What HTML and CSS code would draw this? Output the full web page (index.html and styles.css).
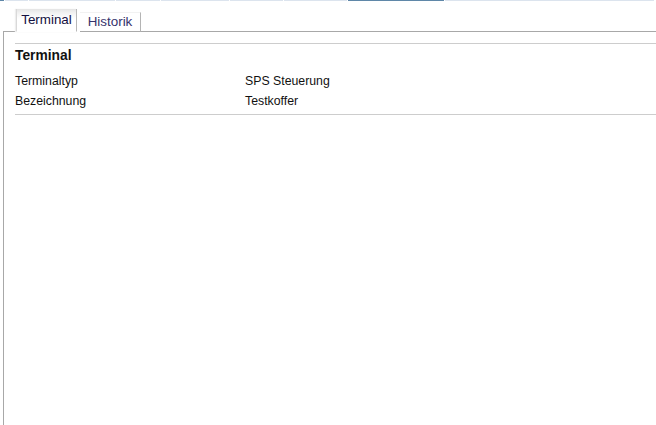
FILE: index.html
```html
<!DOCTYPE html>
<html>
<head>
<meta charset="utf-8">
<link rel="stylesheet" href="styles.css">
</head>
<body>
<div class="topstrip">
  <span class="seg dark" style="width:4px"></span>
  <span class="seg" style="width:23px"></span>
  <span class="seg" style="width:86px"></span>
  <span class="seg" style="width:44px"></span>
  <span class="seg" style="width:68px"></span>
  <span class="seg" style="width:53px"></span>
  <span class="seg" style="width:63px"></span>
  <span class="seg dark" style="width:96px"></span>
  <span class="seg" style="width:209px"></span>
</div>
<div class="tabbar">
  <div class="tab active">Terminal</div>
  <div class="tab">Historik</div>
  <div class="tabfill"></div>
</div>
<div class="panel">
  <div class="content">
    <h2 class="title">Terminal</h2>
    <div class="rows">
      <div class="row"><span class="label">Terminaltyp</span><span class="value">SPS Steuerung</span></div>
      <div class="row"><span class="label">Bezeichnung</span><span class="value">Testkoffer</span></div>
    </div>
  </div>
</div>
</body>
</html>
```
FILE: styles.css
```css
html, body {
  margin: 0;
  padding: 0;
  background: #fff;
  font-family: "Liberation Sans", Arial, sans-serif;
  font-size: 12.3px;
  color: #111;
  height: 425px;
  overflow: hidden;
}
.topstrip {
  display: flex;
  gap: 1px;
  height: 1px;
  width: 656px;
}
.seg {
  height: 1px;
  background: #dce4ee;
  display: block;
}
.seg.dark {
  background: #5f87a8;
}
.tabbar {
  display: flex;
  align-items: flex-end;
  height: 31px;
  padding-left: 3px;
}
.tabbar::before {
  content: "";
  width: 13px;
  height: 0;
  border-bottom: 1px solid #a8a8a8;
  align-self: flex-end;
}
.tab {
  box-sizing: border-box;
  color: #36336c;
  font-size: 13.4px;
  text-align: center;
  border-top: 1px solid #f2f2f2;
  border-right: 1px solid #b4b4b4;
  border-bottom: 1px solid #a8a8a8;
  height: 20px;
  line-height: 17px;
  width: 61px;
  margin-left: 3px;
  background: #fff;
}
.tab.active {
  margin-left: 0;
  height: 23px;
  line-height: 22px;
  width: 61px;
  border: none;
  border-left: 1px solid #d9d9d9;
  border-right: 1px solid #b8b8b8;
  border-bottom: 1px solid #fff;
  background: linear-gradient(#e4e4e4 0px, #f2f2f2 4px, #fff 10px);
  color: #14103f;
  box-shadow: -1px 0 1px #eee;
}
.tabfill {
  flex: 1;
  height: 0;
  border-bottom: 1px solid #a8a8a8;
}
.panel {
  margin-left: 3px;
  border-left: 1px solid #a8a8a8;
  height: 393px;
  padding-left: 11px;
}
.content {
  padding-top: 11px;
}
.title {
  margin: 0;
  border-top: 1px solid #cdcdcd;
  font-size: 13.8px;
  font-weight: bold;
  color: #111;
  padding-top: 4px;
  line-height: 16px;
  height: 20px;
}
.rows {
  padding-top: 6px;
  border-bottom: 1px solid #cdcdcd;
  padding-bottom: 0;
}
.row {
  display: flex;
  height: 20px;
  line-height: 15px;
}
.label {
  width: 230px;
}
.value {
  flex: 1;
}
```
